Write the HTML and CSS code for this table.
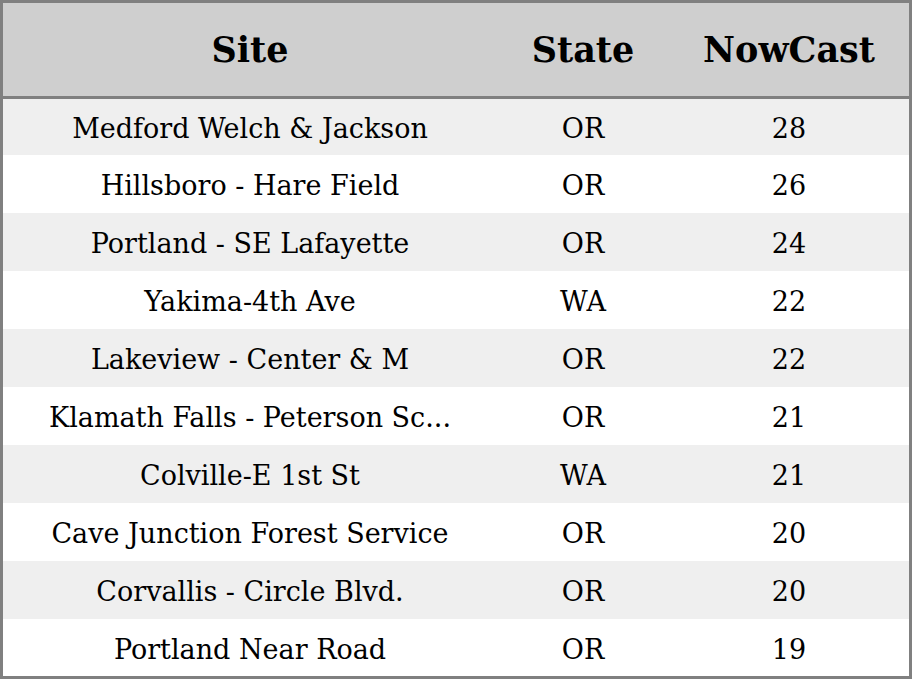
FILE: index.html
```html
<!DOCTYPE html>
<html>
<head>
<meta charset="utf-8">
<link rel="stylesheet" href="styles.css">
</head>
<body>
<div class="table">
  <div class="row head">
    <div class="cell site">Site</div>
    <div class="cell state">State</div>
    <div class="cell now">NowCast</div>
  </div>
  <div class="row odd first"><div class="cell site">Medford Welch &amp; Jackson</div><div class="cell state">OR</div><div class="cell now">28</div></div>
  <div class="row"><div class="cell site">Hillsboro - Hare Field</div><div class="cell state">OR</div><div class="cell now">26</div></div>
  <div class="row odd"><div class="cell site">Portland - SE Lafayette</div><div class="cell state">OR</div><div class="cell now">24</div></div>
  <div class="row"><div class="cell site">Yakima-4th Ave</div><div class="cell state">WA</div><div class="cell now">22</div></div>
  <div class="row odd"><div class="cell site">Lakeview - Center &amp; M</div><div class="cell state">OR</div><div class="cell now">22</div></div>
  <div class="row"><div class="cell site">Klamath Falls - Peterson Sc...</div><div class="cell state">OR</div><div class="cell now">21</div></div>
  <div class="row odd"><div class="cell site">Colville-E 1st St</div><div class="cell state">WA</div><div class="cell now">21</div></div>
  <div class="row"><div class="cell site">Cave Junction Forest Service</div><div class="cell state">OR</div><div class="cell now">20</div></div>
  <div class="row odd"><div class="cell site">Corvallis - Circle Blvd.</div><div class="cell state">OR</div><div class="cell now">20</div></div>
  <div class="row"><div class="cell site">Portland Near Road</div><div class="cell state">OR</div><div class="cell now">19</div></div>
</div>
</body>
</html>
```
FILE: styles.css
```css
html, body {
  margin: 0;
  padding: 0;
  background: #ffffff;
}
.table {
  box-sizing: border-box;
  width: 912px;
  height: 679px;
  border: 3px solid #808080;
  display: flex;
  flex-direction: column;
  font-family: "DejaVu Serif", serif;
  color: #000;
  overflow: hidden;
}
.row {
  display: grid;
  grid-template-columns: 494px 172px 240px;
  flex: 0 0 58px;
  align-items: center;
  background: #ffffff;
  font-size: 27px;
  line-height: 32px;
}
.row.first {
  flex-basis: 56px;
}
.row.odd {
  background: #efefef;
}
.row.head {
  flex: 0 0 93px;
  background: #cfcfcf;
  border-bottom: 3px solid #808080;
  font-weight: bold;
  font-size: 35px;
  line-height: 41px;
}
.cell {
  text-align: center;
  white-space: nowrap;
  overflow: hidden;
  text-overflow: ellipsis;
  padding-top: 3px;
}
.head .cell {
  padding-top: 0;
}
```
